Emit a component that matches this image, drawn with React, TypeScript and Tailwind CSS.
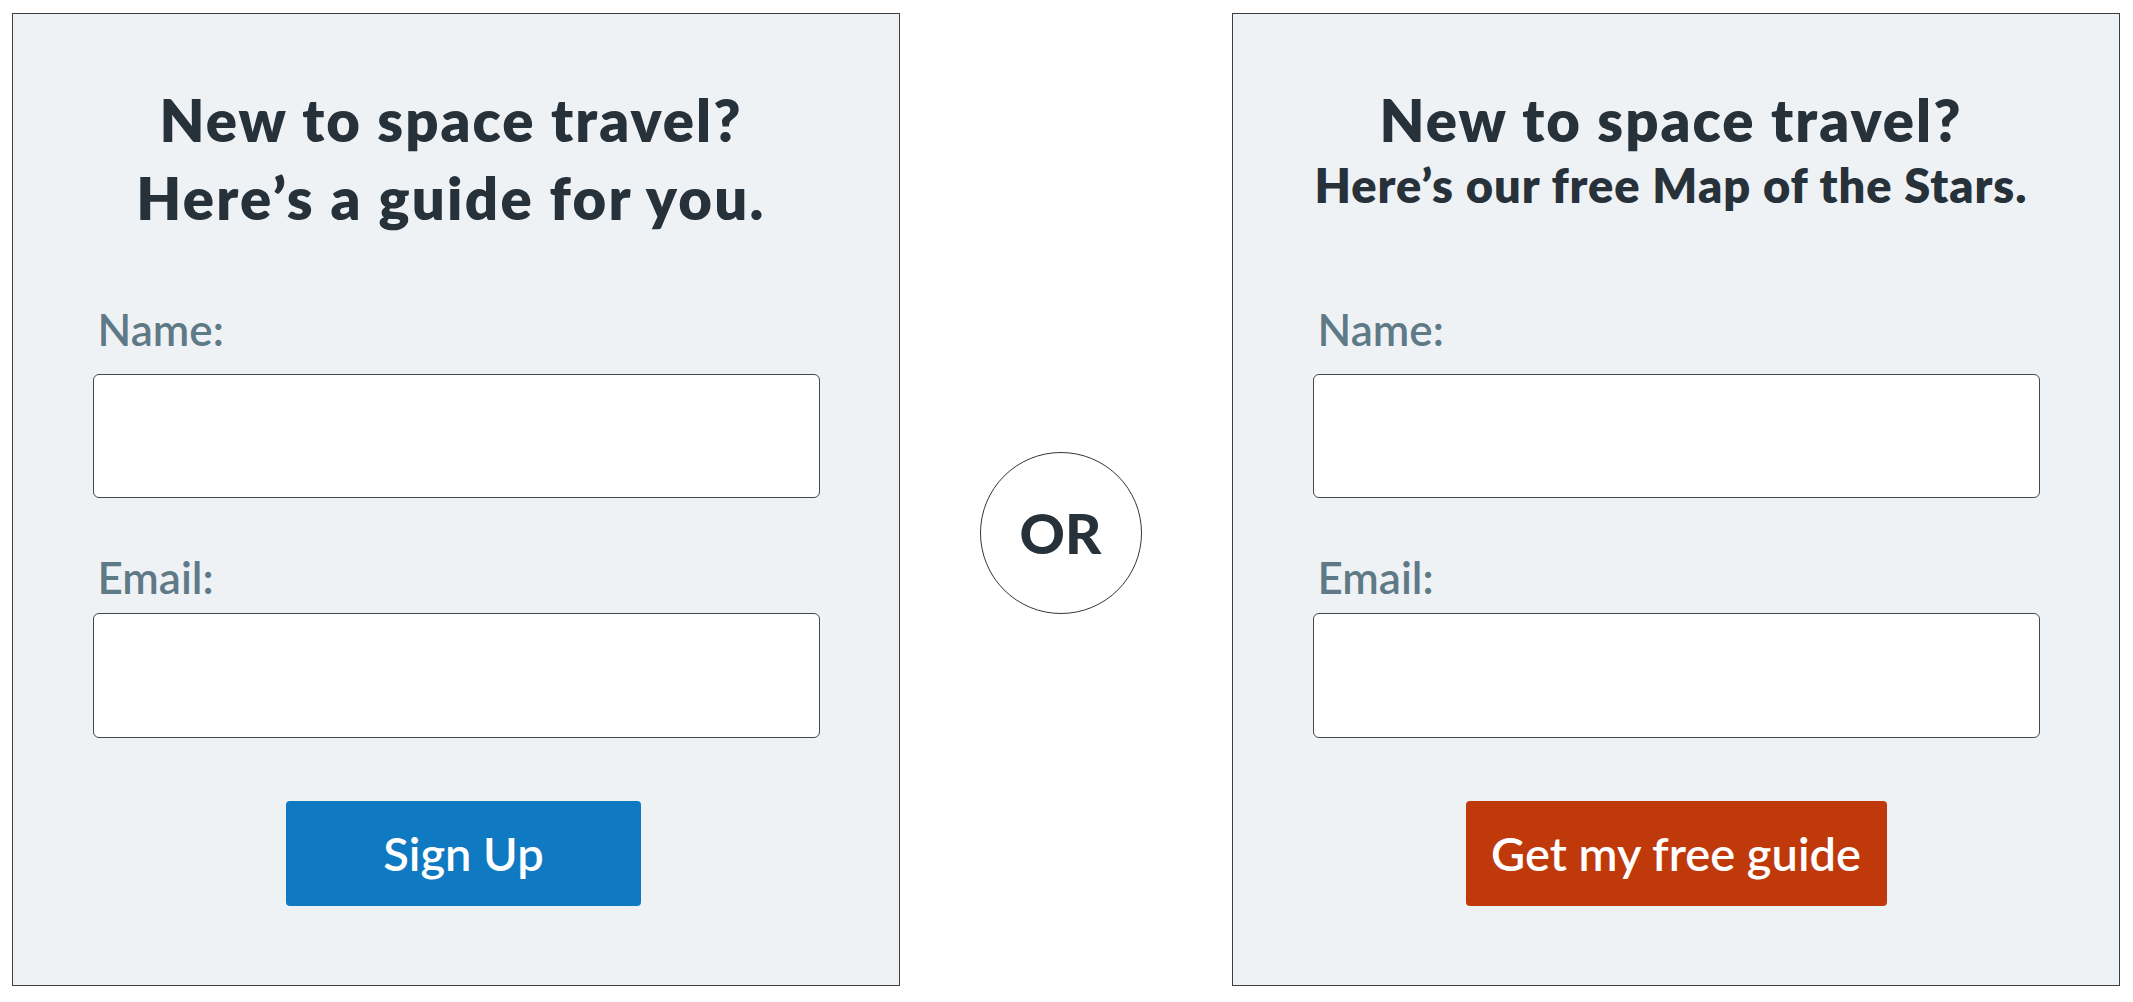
import React from "react";

function Field({ label, first }: { label: string; first?: boolean }) {
  return (
    <div className="flex flex-col w-[727px]">
      <div
        className={`${first ? "mt-[70px]" : "mt-[57px]"} pl-[5px] h-[44px] text-[44px] leading-[44px] font-semibold text-[#5f7a87]`}
      >
        {label}
      </div>
      <div
        className={`${first ? "mt-[23px] h-[124px]" : "mt-[14px] h-[125px]"} w-[727px] bg-white border-[1.5px] border-[#45484b] rounded-[6px]`}
      />
    </div>
  );
}

function Panel({
  line2,
  small,
  button,
  color,
  btnW,
  shift,
}: {
  line2: string;
  small?: boolean;
  button: string;
  color: string;
  btnW: string;
  shift?: boolean;
}) {
  return (
    <div className="w-[888px] h-[973px] shrink-0 border-[1.5px] border-[#3c3f42] bg-[#eff2f5] flex flex-col items-center">
      <div className="mt-[67px] h-[156px] pr-[10px] flex flex-col items-center text-[#27313a] font-extrabold">
        <div className="text-[58px] leading-[78px] tracking-[0.035em]">New to space travel?</div>
        {small ? (
          <div className="text-[47px] leading-[60px] mt-[-4px] tracking-[0.02em]">{line2}</div>
        ) : (
          <div className="text-[58px] leading-[78px] tracking-[0.039em]">{line2}</div>
        )}
      </div>
      <Field label="Name:" first />
      <Field label="Email:" />
      <div
        className={`mt-[63px] h-[105px] ${btnW} ${color} ${shift ? "ml-[15px]" : ""} rounded-[4px] flex items-center justify-center text-white text-[47px] font-semibold`}
      >
        {button}
      </div>
    </div>
  );
}

export default function App() {
  return (
    <div
      className="min-h-screen w-full bg-white flex items-start pl-[12px] pt-[13px]"
      style={{ fontFamily: "Lato, 'Noto Sans', sans-serif" }}
    >
      <Panel
        line2="Here’s a guide for you."
        button="Sign Up"
        color="bg-[#0f79c1]"
        btnW="w-[355px]"
        shift
      />
      <div className="w-[332px] shrink-0 flex justify-center pt-[439px]">
        <div className="w-[162px] h-[162px] rounded-full border-[1.5px] border-[#333638] bg-white flex items-center justify-center text-[56px] font-black text-[#27313a] mr-[11px]">
          OR
        </div>
      </div>
      <Panel
        line2="Here’s our free Map of the Stars."
        small
        button="Get my free guide"
        color="bg-[#c0390b]"
        btnW="w-[421px]"
      />
    </div>
  );
}
